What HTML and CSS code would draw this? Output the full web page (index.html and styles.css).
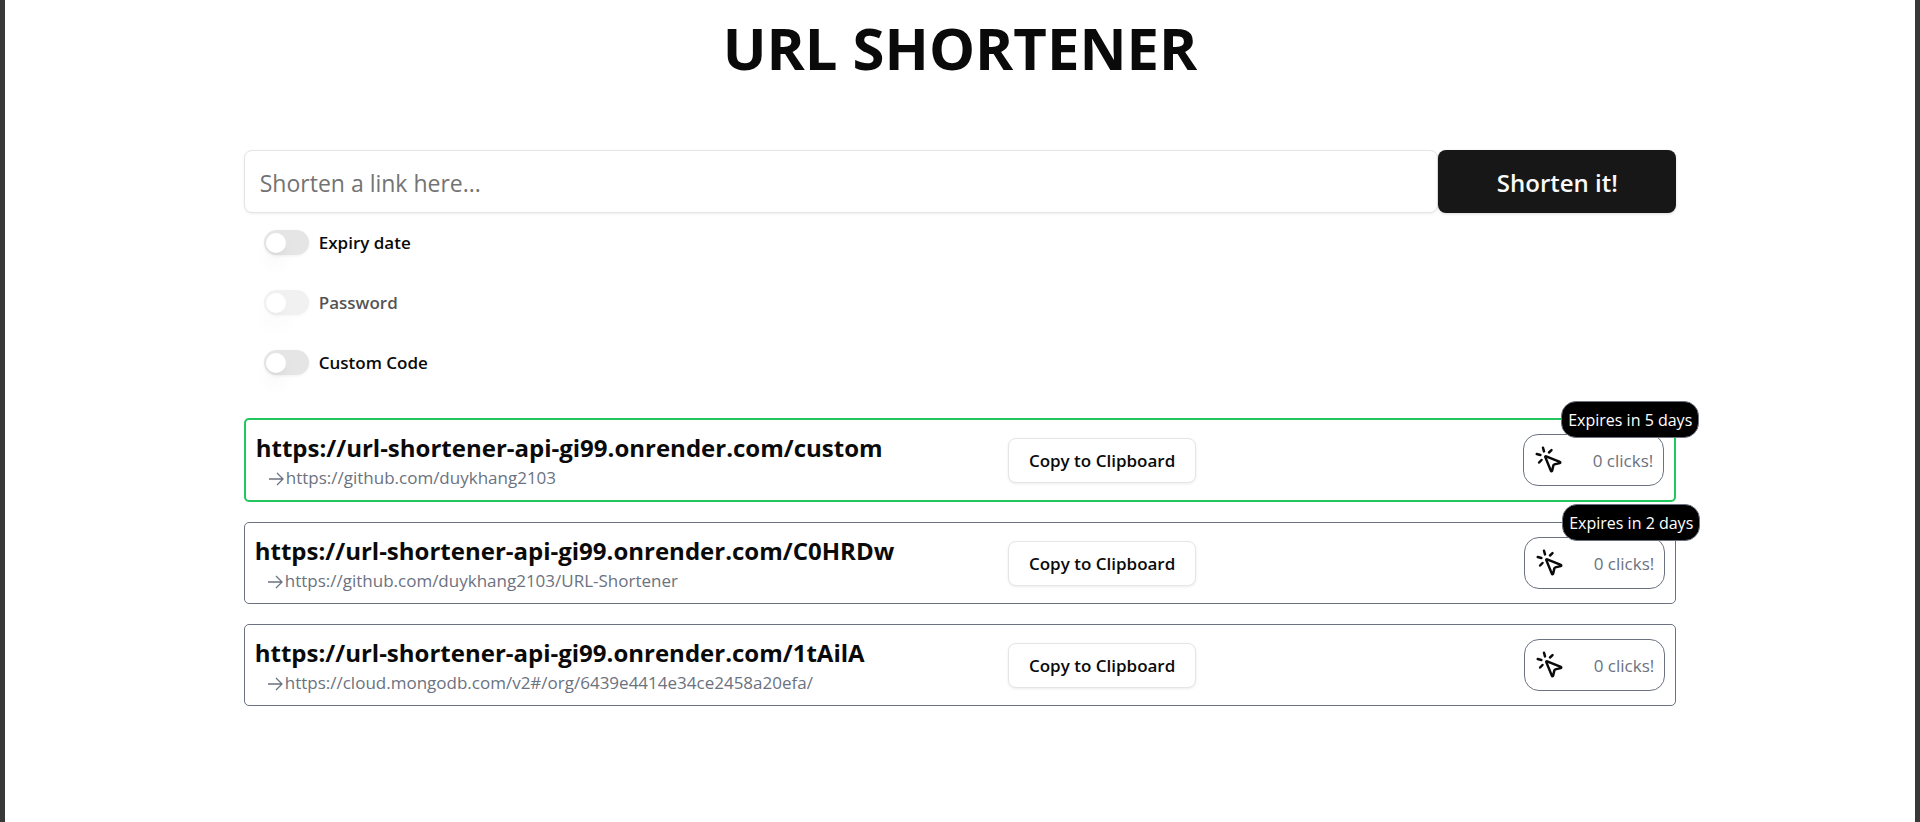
FILE: index.html
```html
<!DOCTYPE html>
<html lang="en">
<head>
<meta charset="utf-8">
<title>URL Shortener</title>
<link rel="stylesheet" href="styles.css">
</head>
<body>
<svg width="0" height="0" class="sprite" aria-hidden="true">
  <symbol id="click" viewBox="0 0 24 24">
    <path d="M14 4.1 12 6"/><path d="m5.1 8-2.9-.8"/><path d="m6 12-1.9 2"/><path d="M7.2 2.2 8 5.1"/>
    <path d="M9.037 9.69a.498.498 0 0 1 .653-.653l11 4.5a.5.5 0 0 1-.074.949l-4.349 1.041a1 1 0 0 0-.74.739l-1.04 4.35a.5.5 0 0 1-.95.074z"/>
  </symbol>
  <symbol id="arrow" viewBox="0 0 16 14">
    <path d="M1 7h14M9 1l6 6-6 6"/>
  </symbol>
</svg>
<main class="page">
  <h1 class="title">URL SHORTENER</h1>
  <form class="form">
    <div class="bar">
      <input class="link-input" type="text" placeholder="Shorten a link here..." aria-label="Link to shorten">
      <button class="submit" type="submit">Shorten it!</button>
    </div>
    <div class="options">
      <div class="option"><input class="switch" type="checkbox" id="expiry"><label for="expiry">Expiry date</label></div>
      <div class="option"><input class="switch" type="checkbox" id="password" disabled><label for="password">Password</label></div>
      <div class="option"><input class="switch" type="checkbox" id="custom"><label for="custom">Custom Code</label></div>
    </div>
  </form>
  <section class="links">
    <article class="card card-new">
      <div class="urls">
        <a class="short" href="#">https://url-shortener-api-gi99.onrender.com/custom</a>
        <div class="long"><svg class="arrow"><use href="#arrow"/></svg><span>https://github.com/duykhang2103</span></div>
      </div>
      <button class="copy" type="button">Copy to Clipboard</button>
      <div class="clicks"><svg class="pointer"><use href="#click"/></svg><span>0 clicks!</span></div>
      <span class="badge">Expires in 5 days</span>
    </article>
    <article class="card">
      <div class="urls">
        <a class="short" href="#">https://url-shortener-api-gi99.onrender.com/C0HRDw</a>
        <div class="long"><svg class="arrow"><use href="#arrow"/></svg><span>https://github.com/duykhang2103/URL-Shortener</span></div>
      </div>
      <button class="copy" type="button">Copy to Clipboard</button>
      <div class="clicks"><svg class="pointer"><use href="#click"/></svg><span>0 clicks!</span></div>
      <span class="badge">Expires in 2 days</span>
    </article>
    <article class="card">
      <div class="urls">
        <a class="short" href="#">https://url-shortener-api-gi99.onrender.com/1tAilA</a>
        <div class="long"><svg class="arrow"><use href="#arrow"/></svg><span>https://cloud.mongodb.com/v2#/org/6439e4414e34ce2458a20efa/</span></div>
      </div>
      <button class="copy" type="button">Copy to Clipboard</button>
      <div class="clicks"><svg class="pointer"><use href="#click"/></svg><span>0 clicks!</span></div>
    </article>
  </section>
</main>
</body>
</html>
```
FILE: styles.css
```css
*, *::before { box-sizing: border-box; }
body {
  margin: 0;
  min-height: 100vh;
  border: solid #383838;
  border-width: 0 5px;
  background: #fff;
  color: #0a0a0a;
  font-family: "Segoe UI", "Open Sans", "Noto Sans", sans-serif;
  font-size: 17px;
}
button, input { font: inherit; color: inherit; }
.sprite { position: absolute; }
.page { width: 75%; margin: 0 auto; }
.title {
  margin: 0;
  padding-top: 9px;
  font-size: 58px;
  line-height: 78px;
  font-weight: 700;
  text-align: center;
}
.form { margin-top: 63px; }
.bar { display: flex; }
.link-input {
  flex: 1;
  min-width: 0;
  height: 63px;
  padding: 6px 15px 4px;
  border: 1px solid #e5e5e5;
  border-radius: 8px;
  background: #fff;
  box-shadow: 0 1px 3px rgba(0, 0, 0, .07);
  font-size: 24px;
}
.link-input::placeholder { color: #737373; opacity: 1; font-size: 23px; }
.submit {
  width: 16.6%;
  padding: 2px 0 0;
  border: 0;
  border-radius: 8px;
  background: #171717;
  box-shadow: 0 1px 3px rgba(0, 0, 0, .15);
  color: #fafafa;
  font-size: 24px;
  font-weight: 600;
  white-space: nowrap;
}
.options { display: grid; gap: 35px; padding: 17px 20px 0; }
.option { display: flex; align-items: center; gap: 10px; height: 25px; font-weight: 600; }
.switch {
  appearance: none;
  width: 45px;
  height: 25px;
  margin: 0;
  padding: 3px 2px 2px;
  border-radius: 13px;
  background: #e5e5e5;
  box-shadow: 0 1px 3px rgba(0, 0, 0, .06);
}
.switch::before {
  content: "";
  display: block;
  width: 20px;
  height: 20px;
  border-radius: 50%;
  background: #fff;
  box-shadow: 0 12px 19px -4px rgba(0, 0, 0, .1), 0 5px 8px -5px rgba(0, 0, 0, .1);
}
.switch:checked::before { margin-left: auto; }
.switch:disabled { opacity: .5; }
.switch:disabled + label { opacity: .7; }
.links { display: grid; gap: 20px; margin-top: 43px; }
.card {
  position: relative;
  display: flex;
  align-items: center;
  padding: 10px;
  border: 1px solid #6b7280;
  border-radius: 5px;
}
.card-new { border: 2px solid #22c55e; }
.urls { width: 53.4%; flex: none; white-space: nowrap; }
.short {
  display: block;
  color: inherit;
  font-size: 24px;
  line-height: 36px;
  font-weight: 700;
  text-decoration: none;
}
.long { display: flex; align-items: center; gap: 2px; padding-left: 12px; color: #6b7280; line-height: 24px; }
.arrow { width: 16px; height: 14px; margin-top: 2px; fill: none; stroke: currentColor; stroke-width: 1.3; }
.copy {
  height: 45px;
  padding: 0 20px;
  border: 1px solid #e5e5e5;
  border-radius: 8px;
  background: #fff;
  box-shadow: 0 1px 3px rgba(0, 0, 0, .08);
  font-weight: 600;
  white-space: nowrap;
}
.clicks {
  display: flex;
  align-items: center;
  justify-content: space-between;
  width: 10%;
  min-width: 120px;
  height: 52px;
  margin-left: auto;
  padding: 0 10px;
  border: 1px solid #6b7280;
  border-radius: 15px;
  color: #6b7280;
  white-space: nowrap;
}
.pointer { width: 30px; height: 30px; fill: none; stroke: #0a0a0a; stroke-width: 2; stroke-linecap: round; stroke-linejoin: round; }
.badge {
  position: absolute;
  top: -19px;
  right: -25px;
  padding: 6px 6px 4px;
  border: 1px solid #6b7280;
  border-radius: 15px;
  background: #000;
  color: #fff;
  font-size: 16px;
  line-height: 25px;
  white-space: nowrap;
}
```
